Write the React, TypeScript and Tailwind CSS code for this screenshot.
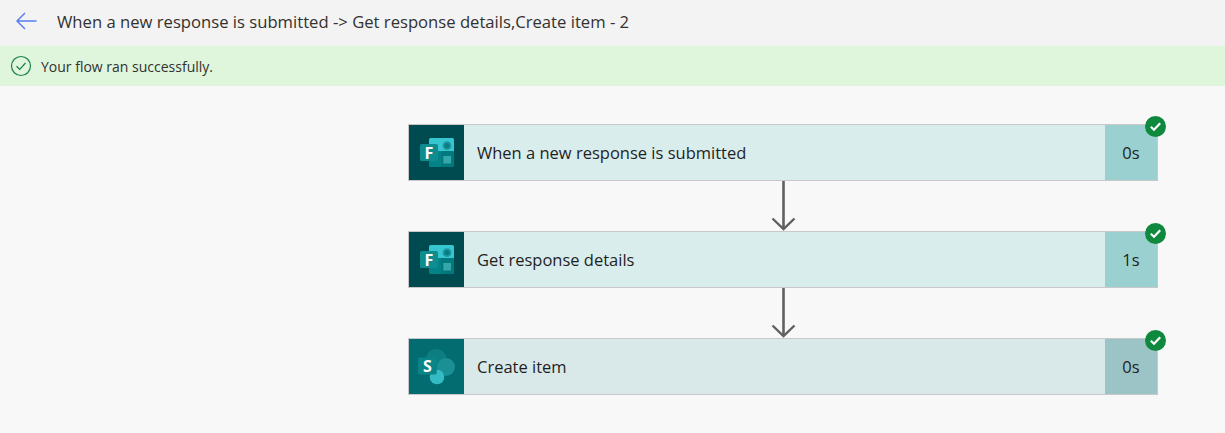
import React from "react";

const FormsIcon = () => (
  <svg width="34" height="29" viewBox="0 0 34 29" className="block">
    <rect x="9" y="0" width="25" height="14" rx="1.5" fill="#37c6d0" />
    <rect x="9" y="13" width="25" height="16" rx="1.5" fill="#038387" />
    <rect x="21" y="13" width="13" height="16" fill="#036c70" opacity="0.45" />
    <circle cx="27" cy="7.7" r="4.4" fill="#1a9ba1" />
    <circle cx="27" cy="7.7" r="2.6" fill="#0b7c80" />
    <rect x="23.3" y="18" width="7.7" height="7.5" fill="#37a6ab" />
    <rect x="0" y="6" width="18" height="17" rx="1.5" fill="#0f8c90" />
    <text x="9" y="20.5" textAnchor="middle" fontFamily="'Open Sans', sans-serif" fontWeight="700" fontSize="16" fill="#ffffff">F</text>
  </svg>
);

const SharePointIcon = () => (
  <svg width="38" height="38" viewBox="0 0 38 38" className="block">
    <circle cx="18.3" cy="11.5" r="10.5" fill="#0d7f83" />
    <circle cx="28" cy="19" r="9" fill="#1a8f94" />
    <circle cx="19" cy="29" r="7.3" fill="#33bcc5" />
    <rect x="0" y="9.5" width="18.7" height="17" rx="1.5" fill="#0b8488" />
    <text x="9.3" y="23.7" textAnchor="middle" fontFamily="'Open Sans', sans-serif" fontWeight="700" fontSize="16" fill="#ffffff">S</text>
  </svg>
);

const Badge = () => (
  <div className="absolute right-[-9px] top-[-9px] flex h-[21px] w-[21px] items-center justify-center rounded-full bg-[#0f893e]">
    <svg width="13" height="11" viewBox="0 0 13 11">
      <path d="M1.8 5.8 L5 8.8 L11.2 2.2" fill="none" stroke="#ffffff" strokeWidth="2.2" />
    </svg>
  </div>
);

const Arrow = () => (
  <div className="flex h-[50px] justify-center pl-[1px]">
    <svg width="27" height="50" viewBox="0 0 27 50" className="block">
      <path d="M13.5 0 V48" stroke="#606060" strokeWidth="2.6" fill="none" />
      <path d="M2.5 37.5 L13.5 48 L24.5 37.5" stroke="#606060" strokeWidth="2.4" fill="none" />
    </svg>
  </div>
);

type CardProps = {
  icon: React.ReactNode;
  label: string;
  time: string;
  iconBg: string;
  bodyBg: string;
  timeBg: string;
};

const Card = ({ icon, label, time, iconBg, bodyBg, timeBg }: CardProps) => (
  <div className="relative flex h-[57px] w-[750px] border border-[#c8c8c8]">
    <div className={`flex w-[55px] shrink-0 items-center justify-center ${iconBg}`}>{icon}</div>
    <div className={`flex flex-1 items-center pl-[13px] pt-[2px] text-[16.5px] text-[#1f1f1f] ${bodyBg}`}>{label}</div>
    <div className={`flex w-[52px] shrink-0 items-center justify-center pt-[2px] text-[16.5px] text-[#1f1f1f] ${timeBg}`}>{time}</div>
    <Badge />
  </div>
);

export default function App() {
  return (
    <div className="h-[433px] w-[1225px] overflow-hidden bg-[#f8f8f8] font-['Open_Sans',sans-serif]">
      <div className="flex h-[46px] items-center bg-[#f3f3f3]">
        <svg width="21" height="18" viewBox="0 0 21 18" className="mb-[4px] ml-[15.5px] block">
          <path d="M20.5 9 H1 M9 1 L1 9 L9 17" fill="none" stroke="#5a7df0" strokeWidth="1.5" />
        </svg>
        <div className="mb-[2px] ml-[20.5px] text-[16.65px] text-[#323130]">
          When a new response is submitted -&gt; Get response details,Create item - 2
        </div>
      </div>
      <div className="flex h-[40px] items-center bg-[#dff6dd]">
        <svg width="22" height="22" viewBox="0 0 22 22" className="ml-[10px] block">
          <circle cx="11" cy="11" r="9.5" fill="none" stroke="#1b7f4b" strokeWidth="1.2" />
          <path d="M6.5 11.3 L9.7 14.3 L15.5 8" fill="none" stroke="#1b7f4b" strokeWidth="1.2" />
        </svg>
        <div className="ml-[9px] text-[14px] text-[#323130]">Your flow ran successfully.</div>
      </div>
      <div className="ml-[408px] mt-[38px] w-[750px]">
        <Card icon={<FormsIcon />} label="When a new response is submitted" time="0s" iconBg="bg-[#004b50]" bodyBg="bg-[#d9eded]" timeBg="bg-[#9bd0d0]" />
        <Arrow />
        <Card icon={<FormsIcon />} label="Get response details" time="1s" iconBg="bg-[#004b50]" bodyBg="bg-[#d9eded]" timeBg="bg-[#9bd0d0]" />
        <Arrow />
        <Card icon={<SharePointIcon />} label="Create item" time="0s" iconBg="bg-[#036c70]" bodyBg="bg-[#d9e8e9]" timeBg="bg-[#9cc4c6]" />
      </div>
    </div>
  );
}
